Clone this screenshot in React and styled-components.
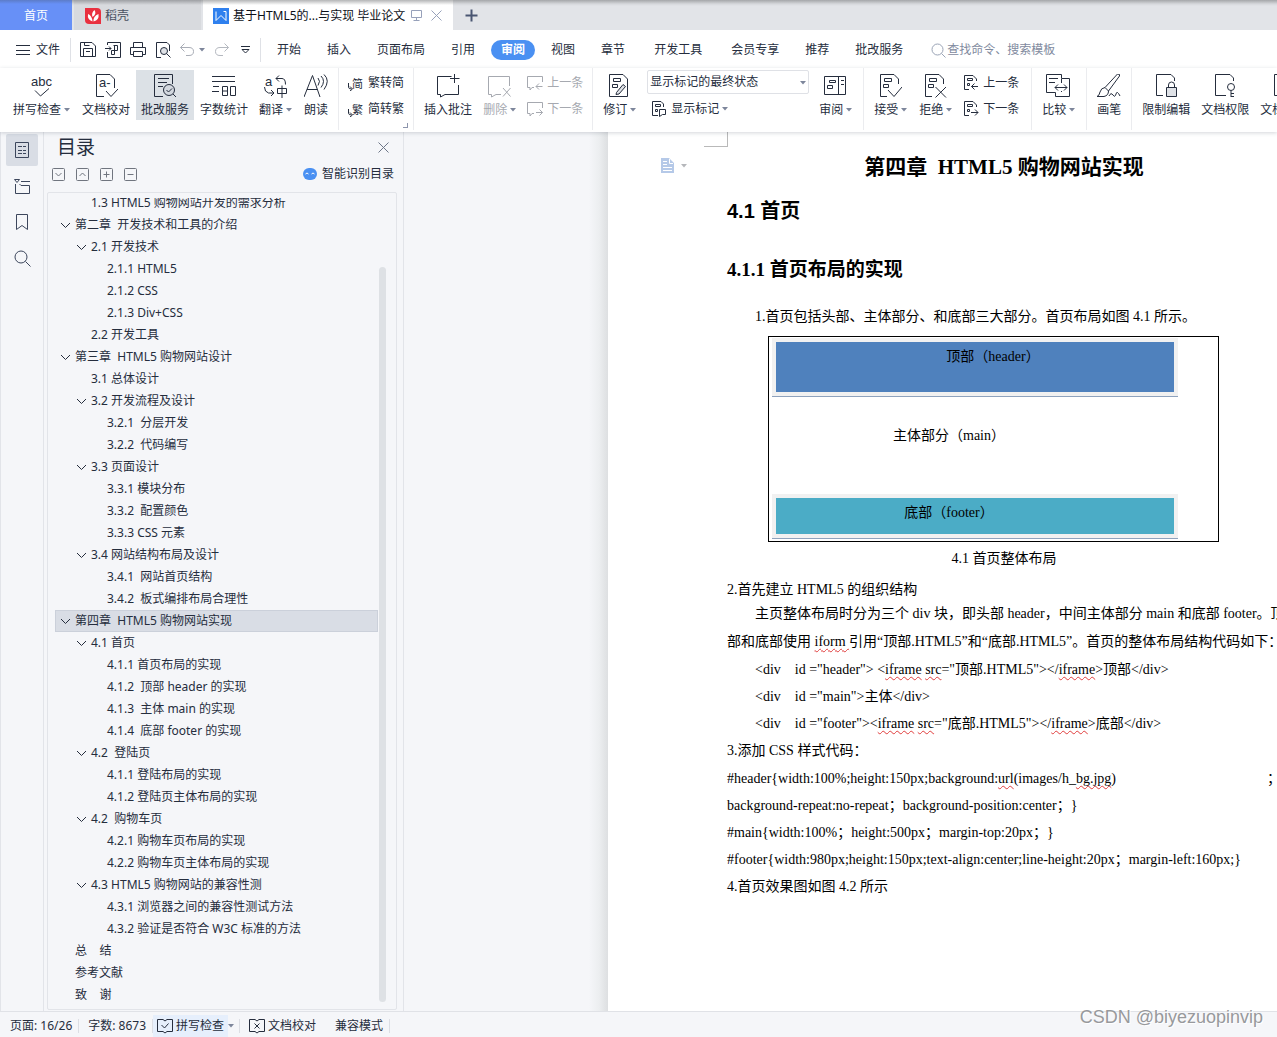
import React from "react";
import styled, { createGlobalStyle, css } from "styled-components";

const ui = '"Noto Sans", "Noto Sans CJK SC", sans-serif';
const serif = '"Liberation Serif", "Noto Sans CJK SC", serif';

const Global = createGlobalStyle`
  * { box-sizing: border-box; }
  body { margin: 0; font: 12px/16px ${ui}; color: #252d3d; background: #f5f6f9; text-spacing-trim: space-all; }
  button, input, select { font: inherit; color: inherit; border: 0; background: none; padding: 0; margin: 0; }
  a { color: inherit; text-decoration: none; }
  svg { display: block; flex: none; }
  ul { list-style: none; margin: 0; padding: 0; }
`;

const Shell = styled.div`
  display: flex;
  flex-direction: column;
  height: 100vh;
  overflow: hidden;
  position: relative;
`;

/* ---------- title tabs ---------- */
const TabBar = styled.nav`
  display: flex;
  flex: none;
  height: 30px;
  background: linear-gradient(#a4a6a9, #d6d8dc 4px, #e2e4e8 6px);
`;
const Tab = styled.button`
  display: flex;
  align-items: center;
  gap: 4px;
  padding: 1px 10px 0;
  ${(p) => p.$kind === "home" && css`
    width: 72px;
    margin-right: 2px;
    justify-content: center;
    color: #fff;
    background: linear-gradient(#5c7cc8, #6790f7 4px);
  `}
  ${(p) => p.$kind === "docer" && css`
    width: 127px;
    margin-right: 2px;
    padding-left: 11px;
    color: #4a5161;
    background: linear-gradient(#9ea0a4, #d8dade 5px);
  `}
  ${(p) => p.$kind === "doc" && css`
    width: 250px;
    color: #0c1018;
    background: linear-gradient(#b4b5b6, #fff 5px);
    white-space: nowrap;
  `}
  ${(p) => p.$kind === "add" && css`
    padding: 0 12px;
    color: #4a5672;
  `}
`;
const TabTools = styled.span`
  display: flex;
  align-items: center;
  gap: 9px;
  margin-left: 2px;
  color: #97a1ba;
`;

/* ---------- menu row ---------- */
const MenuRow = styled.div`
  display: flex;
  align-items: center;
  flex: none;
  height: 38px;
  padding-top: 2px;
  background: #fff;
  white-space: nowrap;
`;
const MenuGroup = styled.div`
  display: flex;
  align-items: center;
  height: 24px;
  padding: 0 ${(p) => p.$pad}px;
  gap: ${(p) => p.$gap}px;
  border-right: 1px solid #dfe1e6;
`;
const PlainButton = styled.button`
  display: flex;
  align-items: center;
  gap: ${(p) => p.$gap || 0}px;
  color: ${(p) => p.$color || "inherit"};
`;
const Menu = styled.div`
  display: flex;
  align-items: center;
  gap: 6px;
  padding-left: 6px;
`;
const MenuItem = styled.button`
  height: 20px;
  margin: 0 ${(p) => (p.$spaced ? 3 : 0)}px;
  padding: 0 10px;
  border-radius: 10px;
  ${(p) => p.$active && css`
    background: #4a90f2;
    color: #fff;
    font-weight: 700;
  `}
`;
const Search = styled.label`
  display: flex;
  align-items: center;
  gap: 1px;
  padding-left: 18px;
  color: #9aa4b6;
  input { width: 130px; outline: 0; }
  input::placeholder { color: #7f8a9e; opacity: 1; }
`;

/* ---------- ribbon ---------- */
const Ribbon = styled.div`
  display: flex;
  flex: none;
  height: 64px;
  padding-left: 2px;
  background: #fff;
  box-shadow: 0 1px 4px rgba(40, 50, 70, 0.2);
  position: relative;
  z-index: 1;
  white-space: nowrap;
`;
const Group = styled.div`
  display: flex;
  flex: none;
  gap: 1px;
  height: 62px;
  padding: 2px ${(p) => p.$end ?? 5}px 0 ${(p) => p.$start ?? 5}px;
  border-right: 1px solid #ebecef;
  position: relative;
`;
const BigButton = styled.button`
  display: flex;
  flex-direction: column;
  align-items: ${(p) => (p.$arrow ? "flex-start" : "center")};
  height: 50px;
  padding: 4px 5px 0;
  gap: 4px;
  background: ${(p) => (p.$active ? "#dce1e6" : "none")};
  color: ${(p) => (p.$muted ? "#a6a9b0" : "inherit")};
`;
const BigIcon = styled.span`
  display: flex;
  justify-content: center;
  align-self: stretch;
  padding-right: ${(p) => (p.$arrow ? 2 : 0)}px;
`;
const Label = styled.span`
  display: flex;
  align-items: center;
`;
const Stack = styled.div`
  display: flex;
  flex-direction: column;
  gap: 2px;
  margin: 0 ${(p) => p.$gap || 0}px;
`;
const SmallButton = styled.button`
  display: flex;
  align-items: center;
  height: 24px;
  padding: 2px 4px 0;
  gap: 4px;
  color: ${(p) => (p.$muted ? "#a6a9b0" : "inherit")};
`;
const Corner = styled.span`
  position: absolute;
  right: 5px;
  bottom: 2px;
  width: 5px;
  height: 5px;
  border: solid #8d95ad;
  border-width: 0 1px 1px 0;
`;
const SelectBox = styled.label`
  position: relative;
  display: flex;
  width: 162px;
  height: 24px;
  select {
    appearance: none;
    width: 100%;
    padding: 0 2px;
    border: 1px solid #dfe1e6;
    border-radius: 2px;
    background: #fff;
  }
  svg { position: absolute; right: 3px; top: 11px; }
`;

/* ---------- work area ---------- */
const Work = styled.div`
  display: flex;
  flex: 1;
  min-height: 0;
`;
const Rail = styled.nav`
  display: flex;
  flex-direction: column;
  align-items: center;
  flex: none;
  gap: 4px;
  width: 44px;
  padding-top: 2px;
  border: solid #e2e4e9;
  border-width: 0 1px;
`;
const RailButton = styled.button`
  display: grid;
  place-items: center;
  width: 32px;
  height: 32px;
  border-radius: 2px;
  color: #3c465c;
  background: ${(p) => (p.$active ? "#d9dde5" : "none")};
`;
const Panel = styled.aside`
  display: flex;
  flex-direction: column;
  flex: none;
  width: 360px;
  padding: 3px 6px 0 3px;
  border-right: 1px solid #e2e4e9;
`;
const PanelHead = styled.header`
  display: flex;
  align-items: center;
  justify-content: space-between;
  height: 24px;
  padding: 0 8px 0 10px;
  h2 { margin: 0; font-size: 19px; line-height: 24px; font-weight: 400; }
  button { color: #6d7688; }
`;
const PanelTools = styled.div`
  display: flex;
  align-items: center;
  gap: 11px;
  height: 30px;
  padding: 0 3px 0 5px;
`;
const Smart = styled(PlainButton)`
  margin-left: auto;
`;
const TreeBox = styled.div`
  display: flex;
  flex: 1;
  min-height: 0;
  gap: 1px;
  margin: 3px 0 1px;
  padding: 5px 10px 3px 7px;
  border: 1px solid #e2e4e9;
  border-radius: 2px;
`;
const TreeView = styled.div`
  display: flex;
  flex-direction: column;
  justify-content: flex-end;
  flex: 1;
  min-height: 0;
  overflow: hidden;
`;
const TreeRow = styled.a`
  display: flex;
  align-items: center;
  flex: none;
  gap: 4px;
  height: 22px;
  padding-left: ${(p) => 5 + p.$level * 16}px;
  white-space: pre;
  background: ${(p) => (p.$active ? "#d9dde5" : "none")};
  box-shadow: ${(p) => (p.$active ? "inset 0 0 0 1px #cbd0da" : "none")};
`;
const Twist = styled.span`
  width: 11px;
`;
const ScrollTrack = styled.div`
  display: flex;
  width: 7px;
  padding: 69px 0 4px;
  &::after { content: ""; flex: 1; border-radius: 4px; background: #dee1e5; }
`;
const Canvas = styled.main`
  flex: 1;
  min-width: 0;
  overflow: hidden;
  display: flex;
  background: #f5f6f9;
`;
const Margin = styled.div`
  flex: none;
  width: 204px;
  background: linear-gradient(to left, #dddfe1, #eceef0 9px, #f5f6f9 19px);
`;
const Page = styled.article`
  display: flex;
  flex: none;
  width: 794px;
  padding-right: 121px;
  background: #fff;
  color: #000;
  font: 14px/28px ${serif};
`;
const Gutter = styled.div`
  display: flex;
  flex-direction: column;
  flex: none;
  width: 119px;
`;
const Crop = styled.span`
  align-self: flex-end;
  width: 24px;
  height: 15px;
  margin-right: -1px;
  border: solid #b9b9b9;
  border-width: 0 1px 1px 0;
`;
const PageMenu = styled(PlainButton)`
  margin: 11px 0 0 53px;
  gap: 7px;
`;
const Body = styled.div`
  flex: 1;
  min-width: 0;
  white-space: pre;
  p { margin: 0; }
`;
const Title = styled.h1`
  margin: 20px 0 0;
  font: 700 21px/30px ${serif};
  text-align: center;
`;
const Section = styled.h2`
  margin: 15px 0 0;
  font: 700 20px/28px "Liberation Sans", "Noto Sans CJK SC", sans-serif;
`;
const SubSection = styled.h3`
  margin: 31px 0 19px;
  font: 700 19px/28px ${serif};
`;
const Para = styled.p`
  text-indent: ${(p) => (p.$indent ? 28 : 0)}px;
  line-height: ${(p) => (p.$code ? 27 : p.$tight ? 20 : 28)}px;
  ${(p) => p.$split && css`display: flex; justify-content: space-between;`}
`;
const Wavy = styled.u`
  text-decoration: underline wavy #e03c3c 1px;
  text-underline-offset: 2px;
  text-decoration-skip-ink: none;
`;
const Figure = styled.figure`
  margin: 5px 0 11px;
`;
const Diagram = styled.div`
  display: flex;
  flex-direction: column;
  width: 451px;
  height: 206px;
  margin-left: 41px;
  padding: 1px 40px 3px 3px;
  border: 1px solid #000;
  text-align: center;
`;
const Block = styled.div`
  height: ${(p) => p.$height}px;
  padding: 1px ${(p) => p.$right || 0}px 0 ${(p) => p.$left || 0}px;
  border: 4px solid #f1f1f1;
  box-shadow: 0 1px 0 #8ea2bd;
  background: ${(p) => p.$fill};
`;
const MainPart = styled.div`
  flex: 1;
  padding: 26px 52px 0 0;
`;
const Caption = styled.figcaption`
  margin-top: 7px;
  line-height: 20px;
  text-align: center;
`;

/* ---------- status ---------- */
const Status = styled.footer`
  display: flex;
  align-items: center;
  flex: none;
  height: 26px;
  padding: 2px 0 0 1px;
  border-top: 1px solid #e0e2e7;
  background: #f5f6f9;
  white-space: nowrap;
`;
const Cell = styled.div`
  display: flex;
  align-items: center;
  height: 14px;
  padding: 0 ${(p) => p.$end ?? 6}px 0 ${(p) => p.$start ?? 9}px;
  border-right: ${(p) => (p.$open ? 0 : 1)}px solid #dcdee4;
`;
const StatusButton = styled(PlainButton)`
  height: 22px;
  gap: 3px;
  padding: 0 4px;
  background: ${(p) => (p.$active ? "#e6effc" : "none")};
`;
const Watermark = styled.div`
  position: absolute;
  right: 14px;
  bottom: 9px;
  font: 18px/22px "Liberation Sans", sans-serif;
  color: #98999c;
  text-shadow: 1px 1px 0 #fff;
  z-index: 2;
`;

/* ---------- icons ---------- */
const Svg = ({ w = 24, h = w, children, ...rest }) => (
  <svg width={w} height={h} viewBox={`0 0 ${w} ${h}`} fill="none" stroke="currentColor" aria-hidden="true" {...rest}>{children}</svg>
);
const Down = ({ color = "#7d869b" }) => (
  <Svg w={6} h={4} stroke="none"><path fill={color} d="M0 0h6L3 3.500z" /></Svg>
);
const ArrowSlot = styled.span`
  display: flex;
  width: 10px;
  padding-left: 3px;
`;
const Cross = ({ s = 11 }) => <Svg w={s}><path d={`M.5 .5L${s - 0.5} ${s - 0.5}M${s - 0.5} .5L.5 ${s - 0.5}`} /></Svg>;

const Letter = ({ x, y, size, children }) => (
  <text x={x} y={y} fontSize={size} fill="currentColor" stroke="none" fontFamily='"Liberation Sans", "Noto Sans CJK SC", sans-serif'>{children}</text>
);
const sheet = "M9 22.500H2.500V.5H16L20.500 5V10";
const lines = <path d="M6.500 4.500h7v3h-7zM5.500 10.500h5v3h-5z" />;
const bubble = "M15.500 2.500H1.500V20.500H4.500V23L9 20.500H22.500V11";

const big = {
  abc: <><Letter x="2" y="12" size="13">abc</Letter><path d="M6 16.500l5.500 5.500L20 14.500" /></>,
  proof: <><path d="M10 22.500H2.500V.5H16L20.500 5V14" /><Letter x="5" y="13" size="13">a-</Letter><path d="M12 17l5 5.500L24 15" /></>,
  service: <><path d="M10 22.500H1.500V.5H19.500V10M5 4.500h11M5 8.500h9M5 12.500h5" /><circle cx="16" cy="16" r="5.500" fill="#d3d8df" /><path d="M13.500 16l2 2 3.500-3.500M20 20l3 3" /></>,
  count: <path d="M0 2.500H23M0 7.500H23M1 12.500H7M0 17.500H7M10.500 12.500h5v9h-5zM10.500 17h5M18.500 12.500h5v9h-5z" />,
  translate: <><Letter x="2" y="12" size="13">a</Letter><path d="M16 1.500l-3 3 3 3M13 4.500h6q3.500 0 3.500 6M1.500 13q0 5 4 6h5M8 16l3 3-3 3M14.500 14.500h9v5h-9zM19 11.500V24" /></>,
  read: <path d="M0 23L8.500 1.500 16 23M3 15.500h10.500M14 4q3 3 0 7.500M17 2q5 5 0 11.500M20 .5q6.500 6 0 15" />,
  insert: <path d={bubble + "M18.500 0V9M14 4.500h9.500"} />,
  remove: <path d="M14 20.500H9L4.500 23V20.500H1.500V2.500H22.500V12M16 14l7.500 8.500M23.500 14L16 22.500" />,
  revise: <><path d="M2.500 .5H16L20.500 5V22.500H2.500zM6.500 4.500h7v3h-7zM5.500 10.500h5v3h-5z" /><path fill="#dfe2e7" d="M9.500 18.500L16 10.500l2.500 2-6.500 7.500-3 .5z" /></>,
  review: <path d="M1.500 2.500H22.500V20.500H1.500zM15.500 2.500V20.500M6.500 6.500h6v2h-6zM4.500 11.500h5v3h-5zM18 6.500h3M18 10.500h3" />,
  accept: <><path d={sheet} />{lines}<path d="M10 16l6 6.500L24 13" /></>,
  reject: <><path d={sheet} />{lines}<path d="M12.500 13L23 23.500M23 13L12.500 23.500" /></>,
  compare: <path d="M15.500 4V.5H.5V18.500H9.500V22.500H23.500V4.500H15.500V9M3 4.500h9M3 8.500h6M9 13.500H21M12 10.500l-3 3 3 3M18 10.500l3 3-3 3M15.500 18v-1" />,
  brush: <path d="M22.500 .5L20.500 0 8 13.500l3.500 3.500L22.500 2zM8 13.500q-4 .5-5 4.500-.5 3.500-3 4.500h7q4.500-1 4.500-5.500M12 22q2-4 4-1t3-1 4 2" />,
  lock: <><path d="M9 21.500H2.500V.5H17L20.500 4V7" /><path d="M14.500 13v-2q0-3 3-3t3 3v2" /><path fill="#dfe2e7" d="M12.500 13.500h10v9h-10z" /></>,
  key: <><path d="M13 21.500H2.500V.5H17L20.500 4V7" /><circle cx="18" cy="13" r="3.500" /><path d="M18 16.500V23M18 19.500h3M18 22.500h3" /></>,
};
const hook = <path d="M.5 8v4q0 2 3 2M2 11.500l2.500 2.500L2 16" />;
const small = {
  toSimple: <><Letter x="4" y="13" size="11">简</Letter>{hook}</>,
  toTrad: <><Letter x="4" y="13" size="11">繁</Letter>{hook}</>,
  bubblePrev: <path d="M7 12.500H5L3 15V12.500H.5V1.500H15.500V7M15.500 11.500H9M12 8.500l-3 3 3 3" />,
  bubbleNext: <path d="M7 12.500H5L3 15V12.500H.5V1.500H15.500V7M9 11.500H15.500M12.500 8.500l3 3-3 3" />,
  docPrev: <path d="M6 14.500H1.500V.5H10L13.500 4V6M4.500 3.500h5v2h-5zM4.500 8.500h2v2h-2zM15 11.500H8.500M11.500 8.500l-3 3 3 3" />,
  docNext: <path d="M6 14.500H1.500V.5H10L13.500 4V6M4.500 3.500h5v2h-5zM4.500 8.500h2v2h-2zM8 11.500H15M12 8.500l3 3-3 3" />,
  marks: <path d="M7 14.500H1.500V.5H10L12.500 3V6M4.500 3.500h5v2h-5zM4.500 8.500h2v2h-2zM8.500 8.500h6v5h-3l-3 2z" />,
};

const Big = ({ icon, label, arrow, muted, active }) => (
  <BigButton type="button" $arrow={arrow} $muted={muted} $active={active}>
    <BigIcon $arrow={arrow}><Svg>{big[icon]}</Svg></BigIcon>
    <Label>{label}{arrow && <ArrowSlot><Down /></ArrowSlot>}</Label>
  </BigButton>
);
const Small = ({ icon, label, arrow, muted }) => (
  <SmallButton type="button" $muted={muted}>
    <Svg w={16}>{small[icon]}</Svg>
    <Label>{label}{arrow && <ArrowSlot><Down /></ArrowSlot>}</Label>
  </SmallButton>
);

const outline = [
  [1, "1.3 HTML5 购物网站开发的需求分析"],
  [0, "第二章  开发技术和工具的介绍", 1],
  [1, "2.1 开发技术", 1],
  [2, "2.1.1 HTML5"],
  [2, "2.1.2 CSS"],
  [2, "2.1.3 Div+CSS"],
  [1, "2.2 开发工具"],
  [0, "第三章  HTML5 购物网站设计", 1],
  [1, "3.1 总体设计"],
  [1, "3.2 开发流程及设计", 1],
  [2, "3.2.1  分层开发"],
  [2, "3.2.2  代码编写"],
  [1, "3.3 页面设计", 1],
  [2, "3.3.1 模块分布"],
  [2, "3.3.2  配置颜色"],
  [2, "3.3.3 CSS 元素"],
  [1, "3.4 网站结构布局及设计", 1],
  [2, "3.4.1  网站首页结构"],
  [2, "3.4.2  板式编排布局合理性"],
  [0, "第四章  HTML5 购物网站实现", 1, true],
  [1, "4.1 首页", 1],
  [2, "4.1.1 首页布局的实现"],
  [2, "4.1.2  顶部 header 的实现"],
  [2, "4.1.3  主体 main 的实现"],
  [2, "4.1.4  底部 footer 的实现"],
  [1, "4.2  登陆页", 1],
  [2, "4.1.1 登陆布局的实现"],
  [2, "4.1.2 登陆页主体布局的实现"],
  [1, "4.2  购物车页", 1],
  [2, "4.2.1 购物车页布局的实现"],
  [2, "4.2.2 购物车页主体布局的实现"],
  [1, "4.3 HTML5 购物网站的兼容性测", 1],
  [2, "4.3.1 浏览器之间的兼容性测试方法"],
  [2, "4.3.2 验证是否符合 W3C 标准的方法"],
  [0, "总    结"],
  [0, "参考文献"],
  [0, "致    谢"],
];

const menus = ["开始", "插入", "页面布局", "引用", "审阅", "视图", "章节", "开发工具", "会员专享", "推荐", "批改服务"];

const boxMarks = [
  ["全部展开", "M3.500 5L6.500 8 9.500 5"],
  ["全部收起", "M3.500 8L6.500 5 9.500 8"],
  ["展开一级", "M3.500 6.500h6M6.500 3.500v6"],
  ["收起一级", "M3.500 6.500h6"],
];

function Header() {
  return (
    <>
      <TabBar>
        <Tab type="button" $kind="home">首页</Tab>
        <Tab type="button" $kind="docer">
          <Svg w={16} stroke="none">
            <path fill="#e9303f" d="M0 0h12q4 0 4 4v12H4q-4 0-4-4z" />
            <path fill="#fff" d="M7.500 13.500Q2 11.500 3 6q4 1.500 4.500 7.500zM7.500 9Q6 5 9.500 2q2.500 4-2 7zM8.500 13.500Q8 8 13.500 6q1 6-5 7.500z" />
          </Svg>
          稻壳
        </Tab>
        <Tab type="button" $kind="doc">
          <Svg w={16}>
            <path fill="#2f80ee" stroke="none" d="M0 0h16v16H0z" />
            <path stroke="#fff" d="M3 3.500v9L8 7.500l5 5V3.500H10.500" />
          </Svg>
          基于HTML5的...与实现 毕业论文
          <TabTools>
            <Svg w={11}><path d="M.5 .5h10v7H.5zM5.500 7.500v3M2.500 10.500h6" /></Svg>
            <Cross />
          </TabTools>
        </Tab>
        <Tab type="button" $kind="add" aria-label="新建">
          <Svg w={13} strokeWidth="2"><path d="M6.500 .5v12M.5 6.500h12" /></Svg>
        </Tab>
      </TabBar>
      <MenuRow>
        <MenuGroup $pad={10} $gap={0}>
          <PlainButton type="button" $gap={6}>
            <Svg w={20} h={12}><path d="M6 1.500h14M6 6.500h14M6 10.500h14" /></Svg>
            <span>文件</span>
          </PlainButton>
        </MenuGroup>
        <MenuGroup $pad={9} $gap={9}>
          <PlainButton type="button" aria-label="保存"><Svg w={16}><path d="M.5 .5H12L15.500 4V14.500H.5zM3.500 14V6.500h9V14M4.500 .5v3h5M6 9.500h4" /></Svg></PlainButton>
          <PlainButton type="button" aria-label="输出为PDF"><Svg w={16}><path d="M2.500 3V.5H15.500V15.500H2.500V10M0 6.500H6M4 4.500l2 2-2 2M8.500 3.500h4v5h-6v4h3v-9" /></Svg></PlainButton>
          <PlainButton type="button" aria-label="打印"><Svg w={16}><path d="M3.500 5V.5h9V5M3 12.500H.5V5.500h15v7H13M3.500 9.500h9v5h-9z" /></Svg></PlainButton>
          <PlainButton type="button" aria-label="打印预览"><Svg w={16}><path d="M6 15.500H1.500V.5H12L14.500 3V9" /><circle cx="9" cy="9" r="3.500" fill="#dfe2e7" /><path d="M11.500 11.500l4 4" /></Svg></PlainButton>
          <PlainButton type="button" aria-label="撤消" $gap={5} $color="#a9adb6"><Svg w={14} h={16}><path d="M4.500 1.500l-4 4 4 4M.5 5.500H9q4.500 0 4.500 4t-4.500 4H6" /></Svg><Down /></PlainButton>
          <PlainButton type="button" aria-label="恢复" $color="#b4b8bf"><Svg w={16}><path d="M10.500 1.500l4 4-4 4M14.500 5.500H6q-4.500 0-4.500 4t4.500 4h3" /></Svg></PlainButton>
          <PlainButton type="button" aria-label="自定义"><Svg w={12} h={10}><path d="M2 1.500h9M3 4.500L6.500 8 10 4.500z" /></Svg></PlainButton>
        </MenuGroup>
        <Menu>
          {menus.map((m) => (
            <MenuItem type="button" key={m} $active={m === "审阅"} $spaced={m === "开发工具"}>{m}</MenuItem>
          ))}
        </Menu>
        <Search>
          <Svg w={15}><circle cx="6.500" cy="6.500" r="5.500" /><path d="M10.500 10.500l4 4" /></Svg>
          <input type="text" placeholder="查找命令、搜索模板" aria-label="查找命令、搜索模板" />
        </Search>
      </MenuRow>
      <Ribbon>
        <Group $start={6}>
          <Big icon="abc" label="拼写检查" arrow />
          <Big icon="proof" label="文档校对" />
          <Big icon="service" label="批改服务" active />
          <Big icon="count" label="字数统计" />
          <Big icon="translate" label="翻译" arrow />
          <Big icon="read" label="朗读" />
        </Group>
        <Group>
          <Stack>
            <Small icon="toSimple" label="繁转简" />
            <Small icon="toTrad" label="简转繁" />
          </Stack>
          <Corner />
        </Group>
        <Group>
          <Big icon="insert" label="插入批注" />
          <Big icon="remove" label="删除" arrow muted />
          <Stack>
            <Small icon="bubblePrev" label="上一条" muted />
            <Small icon="bubbleNext" label="下一条" muted />
          </Stack>
        </Group>
        <Group>
          <Big icon="revise" label="修订" arrow />
          <Stack $gap={4}>
            <SelectBox>
              <select aria-label="显示状态"><option>显示标记的最终状态</option></select>
              <Down />
            </SelectBox>
            <Small icon="marks" label="显示标记" arrow />
          </Stack>
          <Big icon="review" label="审阅" arrow />
        </Group>
        <Group $end={8}>
          <Big icon="accept" label="接受" arrow />
          <Big icon="reject" label="拒绝" arrow />
          <Stack>
            <Small icon="docPrev" label="上一条" />
            <Small icon="docNext" label="下一条" />
          </Stack>
        </Group>
        <Group><Big icon="compare" label="比较" arrow /></Group>
        <Group><Big icon="brush" label="画笔" /></Group>
        <Group>
          <Big icon="lock" label="限制编辑" />
          <Big icon="key" label="文档权限" />
          <Big icon="lock" label="文档认证" />
        </Group>
      </Ribbon>
    </>
  );
}

function Outline() {
  return (
    <>
      <Rail>
        <RailButton type="button" $active aria-label="目录"><Svg w={16} h={18}><path d="M1.500 1.500h13v15h-13zM4 5.500h4M4 9.500h4M4 12.500h4M9 5.500h3M9 9.500h3M9 12.500h3" /></Svg></RailButton>
        <RailButton type="button" aria-label="章节"><Svg w={16}><path d="M.5 1.500h5L3 4.500zM7 3.500h9M1.500 6V15.500h14V7.500H7L5.500 6" /></Svg></RailButton>
        <RailButton type="button" aria-label="书签"><Svg w={12} h={18}><path d="M.5 1.500h11v15L6 12.500.5 16.500z" /></Svg></RailButton>
        <RailButton type="button" aria-label="查找"><Svg w={17}><circle cx="7" cy="7" r="6" /><path d="M11.500 11.500l5 5" /></Svg></RailButton>
      </Rail>
      <Panel>
        <PanelHead>
          <h2>目录</h2>
          <button type="button" aria-label="关闭"><Cross s={11} /></button>
        </PanelHead>
        <PanelTools>
          {boxMarks.map(([name, d]) => (
            <PlainButton type="button" key={name} aria-label={name} $color="#70757f">
              <Svg w={13}><rect x=".5" y=".5" width="12" height="12" rx="1" /><path d={d} /></Svg>
            </PlainButton>
          ))}
          <Smart type="button" $gap={4}>
            <Svg w={15} h={14} stroke="none">
              <rect width="14" height="12" y="1" rx="6" fill="#4a90f2" />
              <path stroke="#fff" d="M2.500 7q1.500-2 3 0M8.500 7q1.500-2 3 0" />
            </Svg>
            智能识别目录
          </Smart>
        </PanelTools>
        <TreeBox>
          <TreeView>
            {outline.map(([level, text, open, active]) => (
              <TreeRow href="#" key={text} $level={level} $active={active}>
                <Twist>{open && <Svg w={11} h={8}><path d="M1 2l4.500 4.500L10 2" /></Svg>}</Twist>
                {text}
              </TreeRow>
            ))}
          </TreeView>
          <ScrollTrack />
        </TreeBox>
      </Panel>
    </>
  );
}

function Doc() {
  return (
    <Canvas>
      <Margin />
      <Page>
        <Gutter>
          <Crop />
          <PageMenu type="button" aria-label="页面选项">
            <Svg w={13} h={15}>
              <path fill="#b5c9e8" stroke="none" d="M0 0h8l5 5v10H0z" />
              <path stroke="#fff" d="M2 3.500h4M2 6.500h4M2 9.500h9M2 12.500h9M8.500 1v4.500H12" />
            </Svg>
            <Down color="#b5b7bb" />
          </PageMenu>
        </Gutter>
        <Body>
          <Title>第四章  HTML5 购物网站实现</Title>
          <Section>4.1 首页</Section>
          <SubSection>4.1.1 首页布局的实现</SubSection>
          <Para $indent>1.首页包括头部、主体部分、和底部三大部分。首页布局如图 4.1 所示。</Para>
          <Figure>
            <Diagram>
              <Block $height={58} $fill="#4f81bd" $left={36}>顶部（header）</Block>
              <MainPart>主体部分（main）</MainPart>
              <Block $height={44} $fill="#4bacc6" $right={52}>底部（footer）</Block>
            </Diagram>
            <Caption>4.1 首页整体布局</Caption>
          </Figure>
          <Para $tight>2.首先建立 HTML5 的组织结构</Para>
          <Para $indent>主页整体布局时分为三个 div 块，即头部 header，中间主体部分 main 和底部 footer。顶</Para>
          <Para>部和底部使用 <Wavy>iform </Wavy>引用“顶部.HTML5”和“底部.HTML5”。首页的整体布局结构代码如下：</Para>
          <Para $code $indent>{'<div    id ="header"> <'}<Wavy>iframe</Wavy> <Wavy>src</Wavy>{'="顶部.HTML5"></'}<Wavy>iframe</Wavy>{">顶部</div>"}</Para>
          <Para $code $indent>{'<div    id ="main">主体</div>'}</Para>
          <Para $code $indent>{'<div    id ="footer"><'}<Wavy>iframe</Wavy> <Wavy>src</Wavy>{'="底部.HTML5"></'}<Wavy>iframe</Wavy>{">底部</div>"}</Para>
          <Para>3.添加 CSS 样式代码：</Para>
          <Para $code $split>
            <span>{"#header{width:100%;height:150px;background:"}<Wavy>url</Wavy>{"(images/h_"}<Wavy>bg.jpg</Wavy>{")"}</span>
            <span>；</span>
          </Para>
          <Para $code>{"background-repeat:no-repeat；background-position:center；}"}</Para>
          <Para $code>{"#main{width:100%；height:500px；margin-top:20px；}"}</Para>
          <Para $code>{"#footer{width:980px;height:150px;text-align:center;line-height:20px；margin-left:160px;}"}</Para>
          <Para>4.首页效果图如图 4.2 所示</Para>
        </Body>
      </Page>
    </Canvas>
  );
}

export default function App() {
  return (
    <Shell>
      <Global />
      <Header />
      <Work>
        <Outline />
        <Doc />
      </Work>
      <Status>
        <Cell>页面: 16/26</Cell>
        <Cell>字数: 8673</Cell>
        <Cell $start={0} $end={5}>
          <StatusButton type="button" $active>
            <Svg w={16}><path d="M6 13.500H.5V1.500H6L8 3l2-1.500h5.500v12H10L8 15l-2-1.500M4.500 7l3 3 4-4.500" /></Svg>
            拼写检查
          </StatusButton>
          <Down />
        </Cell>
        <Cell $open $start={5} $end={6}>
          <StatusButton type="button">
            <Svg w={16}><path d="M6 13.500H.5V1.500H6L8 3l2-1.500h5.500v12H10L8 15l-2-1.500M5.500 5.500l5 5M10.500 5.500l-5 5" /></Svg>
            文档校对
          </StatusButton>
        </Cell>
        <Cell>兼容模式</Cell>
      </Status>
      <Watermark>CSDN @biyezuopinvip</Watermark>
    </Shell>
  );
}
